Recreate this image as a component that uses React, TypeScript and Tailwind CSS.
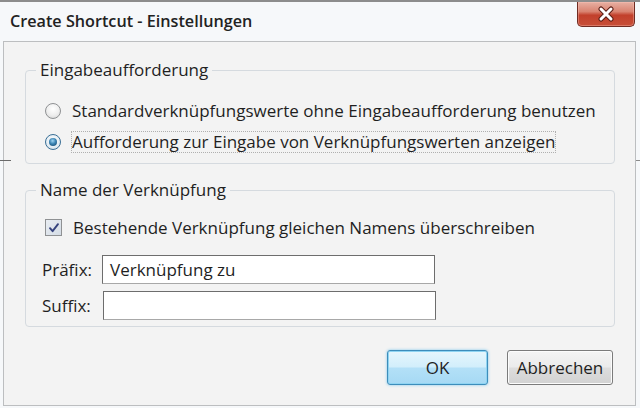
import React from "react";

const font = { fontFamily: '"Open Sans", "Noto Sans", sans-serif' };

function Radio({ checked }: { checked?: boolean }) {
  return (
    <span
      className={
        "flex h-[16px] w-[16px] shrink-0 items-center justify-center rounded-full border " +
        (checked
          ? "border-[#3a6f96] bg-[radial-gradient(circle_at_50%_40%,#ffffff_0%,#e4edf3_60%,#c9d6df_100%)]"
          : "border-[#8f9193] bg-[radial-gradient(circle_at_50%_35%,#ffffff_0%,#eeeeee_55%,#d2d2d2_100%)]")
      }
    >
      {checked && (
        <span className="h-[8px] w-[8px] rounded-full bg-[radial-gradient(circle_at_45%_35%,#9fd4f2_0%,#3b84b3_45%,#0f3f63_100%)]" />
      )}
    </span>
  );
}

function Checkbox() {
  return (
    <span className="flex h-[17px] w-[17px] shrink-0 items-center justify-center border border-[#8f9193] bg-[linear-gradient(135deg,#e9edf2_0%,#d4dce5_100%)]">
      <svg width="12" height="12" viewBox="0 0 12 12">
        <path d="M2 6.2 L4.6 9.2 L10 2.2" fill="none" stroke="#35427d" strokeWidth="1.9" strokeLinejoin="round" strokeLinecap="round" />
      </svg>
    </span>
  );
}

export default function App() {
  return (
    <div className="relative h-[408px] w-[640px] overflow-hidden border-t-2 border-[#8c8c8c] bg-[#f6f8fa] text-[#1f1f1f]" style={font}>
      {/* title bar */}
      <div className="flex h-[39px] items-start justify-between">
        <div className="pl-[10px] pt-[8px] text-[16.2px] font-semibold leading-[22px] text-[#222]">
          Create Shortcut - Einstellungen
        </div>
        <div className="mr-[5px] flex h-[25px] w-[58px] items-center justify-center rounded-b-[5px] border border-t-0 border-[#6f2b22] bg-[linear-gradient(180deg,#e7b0a3_0%,#d98371_40%,#c2402c_55%,#c74f38_100%)] shadow-[inset_0_0_0_1px_rgba(255,200,190,0.35)]">
          <svg width="22" height="16" viewBox="0 0 22 16">
            <path d="M6 3 L16 13 M16 3 L6 13" stroke="#5a1c14" strokeWidth="5" strokeLinecap="round" />
            <path d="M6 3 L16 13 M16 3 L6 13" stroke="#ffffff" strokeWidth="3" strokeLinecap="round" />
          </svg>
        </div>
      </div>

      {/* content */}
      <div className="ml-[3px] mr-[4px] h-[365px] border border-[#bcbec0] bg-[#f3f3f3] pl-[21px] pr-[20px] text-[17px]">
        <fieldset className="mt-[17px] rounded-[4px] border border-[#d5dadf] pb-[6px] pl-[10px] pr-[10px]">
          <legend className="px-[4px] leading-[22px]">Eingabeaufforderung</legend>
          <div className="pt-[14px]">
            <div className="ml-[9px] flex h-[31px] items-center gap-[11px]">
              <Radio />
              <span className="leading-[22px]">Standardverknüpfungswerte ohne Eingabeaufforderung benutzen</span>
            </div>
            <div className="ml-[9px] flex h-[31px] items-center gap-[10px]">
              <Radio checked />
              <span className="border border-dotted border-[#b0b0b0] leading-[20px]">
                Aufforderung zur Eingabe von Verknüpfungswerten anzeigen
              </span>
            </div>
          </div>
        </fieldset>

        <fieldset className="mt-[15px] rounded-[4px] border border-[#d5dadf] pb-[6px] pl-[10px] pr-[10px]">
          <legend className="px-[4px] leading-[22px]">Name der Verknüpfung</legend>
          <div className="pt-[11px]">
            <div className="ml-[9px] flex h-[31px] items-center gap-[11px]">
              <Checkbox />
              <span className="leading-[22px]">Bestehende Verknüpfung gleichen Namens überschreiben</span>
            </div>
            <div className="ml-[6px] mt-[12px] flex h-[29px] items-center">
              <span className="w-[60px] shrink-0">Präfix:</span>
              <div className="flex h-[29px] w-[333px] items-center border border-[#6d6d6d] border-b-[#a8a8a8] bg-white pl-[7px]">
                Verknüpfung zu
              </div>
            </div>
            <div className="ml-[6px] mt-[7px] flex h-[29px] items-center">
              <span className="w-[61px] shrink-0">Suffix:</span>
              <div className="h-[29px] w-[333px] border border-[#6d6d6d] border-b-[#a8a8a8] bg-white" />
            </div>
          </div>
        </fieldset>

        <div className="mt-[23px] flex justify-end gap-[19px] pr-[2px]">
          <button className="flex h-[35px] w-[101px] items-center justify-center rounded-[3px] border border-[#3d8dbb] bg-[linear-gradient(180deg,#e6f6fd_0%,#d2eefb_48%,#b3e0f7_52%,#a6d9f4_100%)] shadow-[inset_0_0_0_1px_#8fd4f2,0_0_3px_#7cc7ec]">
            OK
          </button>
          <button className="flex h-[35px] w-[106px] items-center justify-center rounded-[3px] border border-[#7b7b7b] bg-[linear-gradient(180deg,#f4f4f4_0%,#ebebeb_48%,#dddddd_52%,#d2d2d2_100%)] shadow-[inset_0_0_0_1px_#fcfcfc]">
            Abbrechen
          </button>
        </div>
      </div>

      {/* stray background-window lines */}
      <div className="absolute left-0 top-[158px] h-px w-[11px] bg-[#6a6a6a]" />
      <div className="absolute right-0 top-[158px] h-px w-[4px] bg-[#8a8a8a]" />
    </div>
  );
}
